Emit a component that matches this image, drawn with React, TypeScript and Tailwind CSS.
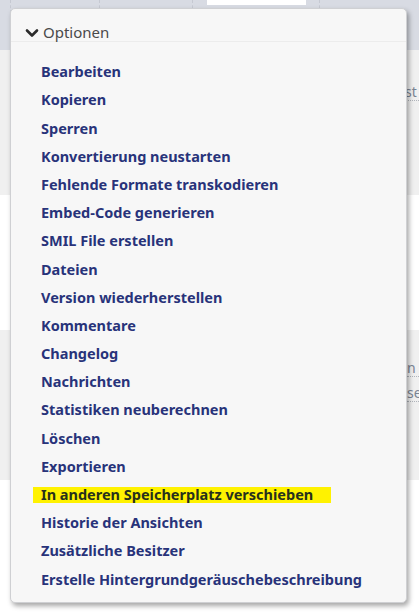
import React from "react";

const items = [
  "Bearbeiten",
  "Kopieren",
  "Sperren",
  "Konvertierung neustarten",
  "Fehlende Formate transkodieren",
  "Embed-Code generieren",
  "SMIL File erstellen",
  "Dateien",
  "Version wiederherstellen",
  "Kommentare",
  "Changelog",
  "Nachrichten",
  "Statistiken neuberechnen",
  "Löschen",
  "Exportieren",
  "In anderen Speicherplatz verschieben",
  "Historie der Ansichten",
  "Zusätzliche Besitzer",
  "Erstelle Hintergrundgeräuschebeschreibung",
];

export default function App() {
  return (
    <div
      className="relative w-[419px] h-[614px] overflow-hidden bg-white"
      style={{ fontFamily: '"Noto Sans", "Open Sans", sans-serif' }}
    >
      {/* background page */}
      <div className="flex flex-col">
        <div className="h-[50px] bg-[#d8dbe3] flex">
          <div className="w-[11px] border-r border-dashed border-[#c6c9d2]" />
          <div className="w-[89px] border-r border-dashed border-[#c6c9d2]" />
          <div className="w-[93px] border-r border-dashed border-[#c6c9d2]" />
          <div className="w-[14px]" />
          <div className="w-[99px] h-[5px] bg-white" />
          <div className="w-[14px] border-r border-dashed border-[#c6c9d2]" />
        </div>
        <div className="h-[145px] bg-[#f0f0f0] flex justify-end">
          <div className="mt-[34px] w-[14px] text-[14px] text-[#7a8494] leading-[16px] border-b border-dotted border-[#b0b4bb] h-[17px] overflow-hidden">
            st
          </div>
        </div>
        <div className="h-[135px] bg-white" />
        <div className="h-[150px] bg-[#f0f0f0] flex flex-col items-end">
          <div className="mt-[30px] w-[12px] text-[14px] text-[#7a8494] leading-[16px] border-b border-dotted border-[#b0b4bb] h-[17px] overflow-hidden">
            n
          </div>
          <div className="mt-[8px] w-[12px] text-[14px] text-[#7a8494] leading-[16px] border-b border-dotted border-[#b0b4bb] h-[17px] overflow-hidden">
            se
          </div>
        </div>
        <div className="h-[134px] bg-white" />
      </div>

      {/* dropdown panel */}
      <div className="absolute left-[10px] top-[8px] w-[397px] h-[595px] rounded-[5px] bg-[#f7f7f7] border border-[#cfd0d3] shadow-[2px_3px_5px_rgba(0,0,0,0.35)]">
        <div className="h-[33px] flex items-center pt-[15px] pb-[1px] pl-[14px] border-b border-[#ececec]">
          <svg width="14" height="10" viewBox="0 0 14 10" className="mr-[4px] mt-[1px]">
            <path d="M2 2.5 L7 7.5 L12 2.5" fill="none" stroke="#2b2b2b" strokeWidth="2.6" strokeLinecap="round" strokeLinejoin="round" />
          </svg>
          <span className="text-[15px] text-[#4a4a4a]">Optionen</span>
        </div>
        <div className="pt-[16px] pl-[30px] flex flex-col">
          {items.map((t) =>
            t === "In anderen Speicherplatz verschieben" ? (
              <div key={t} className="h-[28.2px] flex items-center">
                <span className="-ml-[8px] pl-[8px] pr-[18px] bg-[#fff200] h-[16px] flex items-center text-[14.5px] font-bold text-[#27301c] whitespace-nowrap">
                  {t}
                </span>
              </div>
            ) : (
              <div key={t} className="h-[28.2px] flex items-center text-[14.5px] font-bold text-[#28337a] whitespace-nowrap">
                {t}
              </div>
            )
          )}
        </div>
      </div>
    </div>
  );
}
